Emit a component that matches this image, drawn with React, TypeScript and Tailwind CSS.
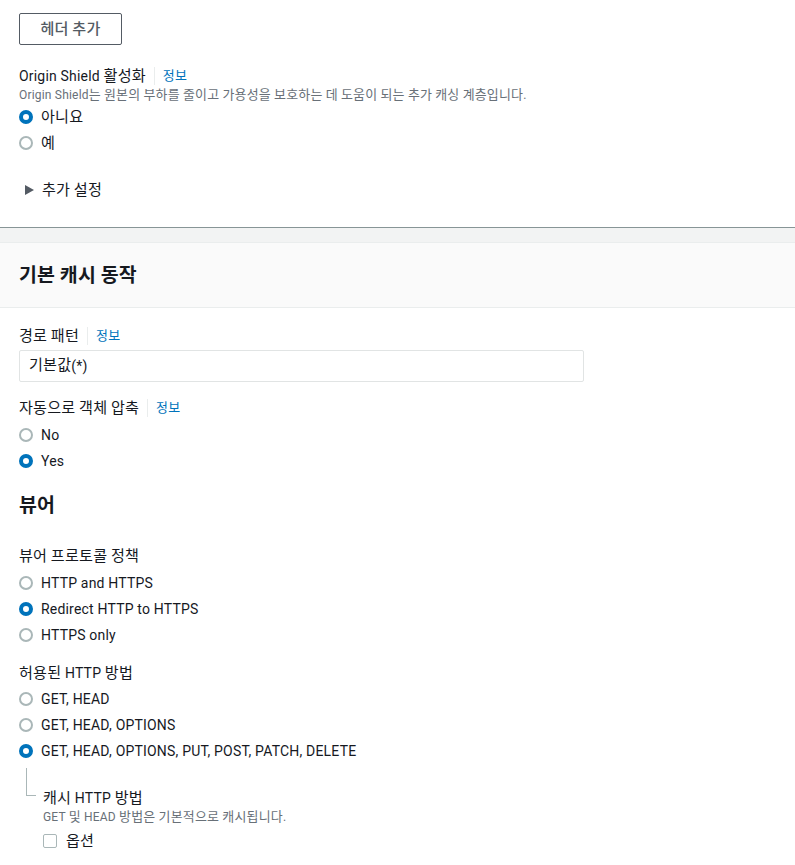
import React from "react";

const FONT = { fontFamily: 'Roboto, "Noto Sans CJK KR", sans-serif' };

// 한글 구간만 살짝 키워서 원본 폰트 폭에 맞춤
function Ko({ children }: { children: string }) {
    const parts = children.split(/([\uAC00-\uD7A3]+)/);
    return (
        <>
            {parts.map((p, i) =>
                /[\uAC00-\uD7A3]/.test(p) ? (
                    <span key={i} className="text-[1.08em] leading-none">{p}</span>
                ) : (
                    p
                )
            )}
        </>
    );
}

function Radio({ label, checked }: { label: string; checked?: boolean }) {
    return (
        <div className="flex items-center h-[26px]">
            <span
                className={`w-[14px] h-[14px] rounded-full bg-white shrink-0 ${checked ? "border-[4px] border-[#0073bb]" : "border-2 border-[#aab7b8]"}`}
            />
            <span className="ml-2 text-[14px] leading-5 text-[#16191f]"><Ko>{label}</Ko></span>
        </div>
    );
}

function Label({ text, info }: { text: string; info?: boolean }) {
    return (
        <div className="flex items-center h-5 text-[14px] leading-5 text-[#16191f]">
            <span><Ko>{text}</Ko></span>
            {info && (
                <>
                    <span className="mx-2 w-px h-[18px] bg-[#eaeded]" />
                    <span className="text-[12px] text-[#0073bb]"><Ko>정보</Ko></span>
                </>
            )}
        </div>
    );
}

export default function App() {
    return (
        <div className="w-[795px] min-h-[865px] bg-white tracking-[0.012em]" style={FONT}>

            {/* 원본 설정 하단 */}
            <div className="px-[19px] pt-[13px] pb-[27px]">
                <button
                    type="button"
                    className="w-[103px] h-[32px] border border-[#545b64] rounded-[2px] text-[14px] text-[#545b64] font-medium"
                >
                    <Ko>헤더 추가</Ko>
                </button>

                <div className="mt-[21px]">
                    <Label text="Origin Shield 활성화" info />
                    <p className="mt-px text-[12px] leading-4 text-[#687078]">
                        <Ko>Origin Shield는 원본의 부하를 줄이고 가용성을 보호하는 데 도움이 되는 추가 캐싱 계층입니다.</Ko>
                    </p>
                    <div className="mt-[1px]">
                        <Radio label="아니요" checked />
                        <Radio label="예" />
                    </div>
                </div>

                <div className="mt-[24px] flex items-center h-5 pl-[6px]">
                    <svg width="9" height="10" viewBox="0 0 9 10">
                        <path d="M0 0 L9 5 L0 10 Z" fill="#545b64" />
                    </svg>
                    <span className="ml-[8px] text-[14px] leading-5 text-[#16191f]"><Ko>추가 설정</Ko></span>
                </div>
            </div>

            {/* 구분 */}
            <div className="border-t border-[#879596] h-[15px] bg-[#f2f3f3]" />

            {/* 기본 캐시 동작 헤더 */}
            <div className="h-[66px] border-y border-[#eaeded] bg-[#fafafa] flex items-center px-[19px] pt-[2px]">
                <h2 className="text-[18px] leading-6 font-bold text-[#16191f]"><Ko>기본 캐시 동작</Ko></h2>
            </div>

            <div className="px-[19px] pt-[18px] pb-4">
                <Label text="경로 패턴" info />
                <div className="mt-[4px] w-[565px] h-[32px] border border-[#e1e4e4] rounded-[2px] flex items-center px-[9px] text-[14px] text-[#16191f]">
                    <Ko>기본값(*)</Ko>
                </div>

                <div className="mt-[16px]">
                    <Label text="자동으로 객체 압축" info />
                    <div className="mt-[4px]">
                        <Radio label="No" />
                        <Radio label="Yes" checked />
                    </div>
                </div>

                <h2 className="mt-[20px] text-[18px] leading-6 font-bold text-[#16191f]"><Ko>뷰어</Ko></h2>

                <div className="mt-[28px]">
                    <Label text="뷰어 프로토콜 정책" />
                    <div className="mt-[4px]">
                        <Radio label="HTTP and HTTPS" />
                        <Radio label="Redirect HTTP to HTTPS" checked />
                        <Radio label="HTTPS only" />
                    </div>
                </div>

                <div className="mt-[15px]">
                    <Label text="허용된 HTTP 방법" />
                    <div className="mt-[3px]">
                        <Radio label="GET, HEAD" />
                        <Radio label="GET, HEAD, OPTIONS" />
                        <Radio label="GET, HEAD, OPTIONS, PUT, POST, PATCH, DELETE" checked />
                    </div>
                </div>

                {/* 하위 설정 */}
                <div className="flex">
                    <div className="w-[24px] shrink-0">
                        <div className="ml-[7px] mt-[4px] w-[10px] h-[28px] border-l border-b border-[#aab7b8]" />
                    </div>
                    <div className="pt-[24px]">
                        <Label text="캐시 HTTP 방법" />
                        <p className="mt-px text-[12px] leading-4 text-[#687078]">
                            <Ko>GET 및 HEAD 방법은 기본적으로 캐시됩니다.</Ko>
                        </p>
                        <div className="mt-[6px] flex items-center h-5">
                            <span className="w-[14px] h-[14px] border border-[#aab7b8] rounded-[2px] bg-white" />
                            <span className="ml-[9px] text-[14px] leading-5 text-[#16191f]"><Ko>옵션</Ko></span>
                        </div>
                    </div>
                </div>
            </div>
        </div>
    );
}
